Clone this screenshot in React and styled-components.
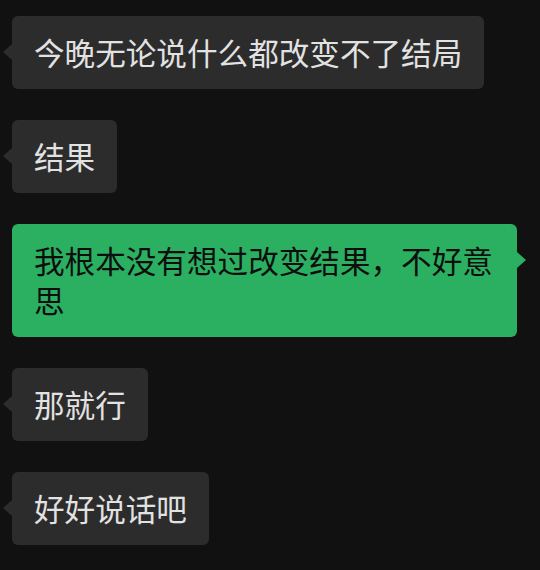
import React from "react";
import styled, { createGlobalStyle, css } from "styled-components";

const GlobalStyle = createGlobalStyle`
  html, body {
    margin: 0;
    padding: 0;
    background: #111111;
  }
`;

const Chat = styled.div`
  width: 540px;
  height: 570px;
  box-sizing: border-box;
  padding: 16px 23px 0 12px;
  display: flex;
  flex-direction: column;
  align-items: flex-start;
  gap: 31px;
  background: #111111;
  overflow: hidden;
  font-family: "Noto Sans CJK SC", "Noto Sans", sans-serif;
`;

const Bubble = styled.div`
  position: relative;
  box-sizing: border-box;
  max-width: 505px;
  padding: 16px 22px 17px;
  border-radius: 6px;
  font-size: 30.6px;
  line-height: 40px;
  background: ${({ $mine }) => ($mine ? "#2bb062" : "#2c2c2c")};
  color: ${({ $mine }) => ($mine ? "#0e0e0e" : "#e2e2e2")};
  align-self: ${({ $mine }) => ($mine ? "flex-end" : "flex-start")};

  &::before {
    content: "";
    position: absolute;
    top: 28px;
    width: 0;
    height: 0;
    border-top: 8px solid transparent;
    border-bottom: 8px solid transparent;
    ${({ $mine }) =>
      $mine
        ? css`
            right: -9px;
            border-left: 9px solid #2bb062;
          `
        : css`
            left: -9px;
            border-right: 9px solid #2c2c2c;
          `}
  }
`;

const messages = [
  { text: "今晚无论说什么都改变不了结局" },
  { text: "结果" },
  { text: "我根本没有想过改变结果，不好意思", mine: true },
  { text: "那就行" },
  { text: "好好说话吧" },
];

const App = () => {
  return (
    <>
      <GlobalStyle />
      <Chat>
        {messages.map((m, i) => (
          <Bubble key={i} $mine={m.mine}>
            {m.text}
          </Bubble>
        ))}
      </Chat>
    </>
  );
};

export default App;
